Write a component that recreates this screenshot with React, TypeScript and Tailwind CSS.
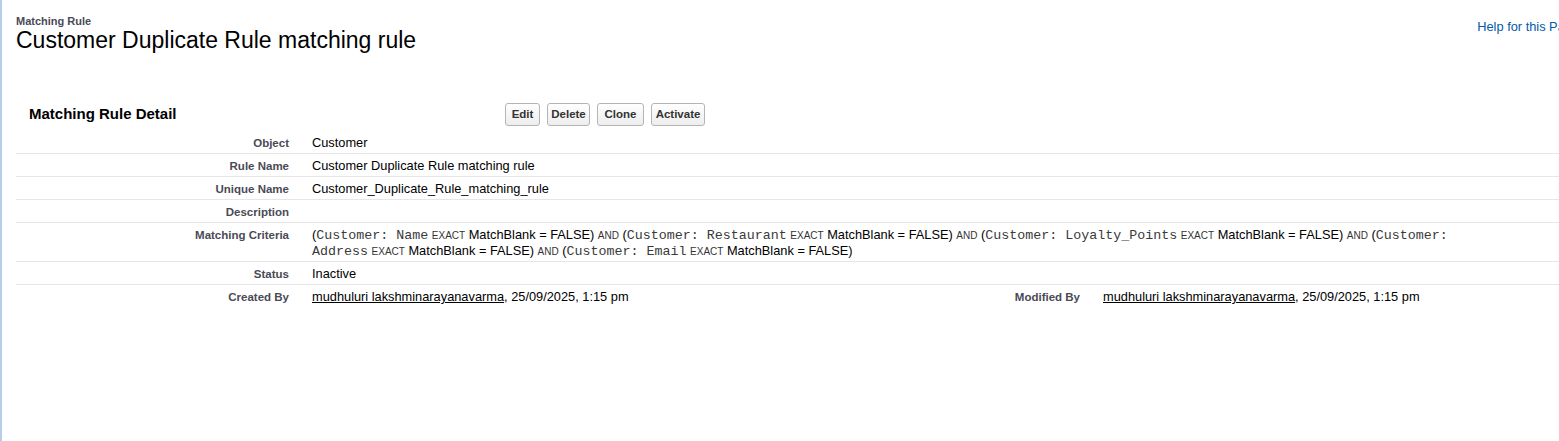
import React from "react";

const font = { fontFamily: '"Liberation Sans", Arial, sans-serif' };

function Btn({ label, w }: { label: string; w: string }) {
  return (
    <button
      className={`${w} h-[23px] rounded-[3px] border border-[#b5b5b5] bg-gradient-to-b from-white to-[#ededed] text-[11.5px] font-bold text-[#333] leading-none`}
    >
      {label}
    </button>
  );
}

function Mono({ children }: { children: React.ReactNode }) {
  return <span className="font-['Liberation_Mono',monospace] text-[13.33px] leading-none text-[#3a3a3a]">{children}</span>;
}

function Kw({ children }: { children: React.ReactNode }) {
  return <span className="text-[10px] uppercase leading-none text-[#333]">{children}</span>;
}

const labelCls = "shrink-0 pr-[10px] pt-[4px] pb-[2px] text-right text-[11.5px] font-bold leading-[16px] text-[#4a4a56]";
const valueCls = "pl-[13px] pt-[4px] pb-[2px] text-[12.8px] leading-[16px] text-black";

function Row({ label, children, last }: { label: string; children?: React.ReactNode; last?: boolean }) {
  return (
    <div className={`flex ${last ? "" : "border-b border-[#e6e6e6]"}`}>
      <div className={`w-[283px] ${labelCls}`}>{label}</div>
      <div className={`w-[1190px] min-h-[22px] ${valueCls}`}>{children}</div>
    </div>
  );
}

export default function App() {
  const crit: [string, boolean][] = [
    ["Name", true],
    ["Restaurant", true],
    ["Loyalty_Points", true],
    ["Address", true],
    ["Email", false],
  ];
  return (
    <div style={font} className="min-h-[441px] w-full overflow-hidden border-l-2 border-[#b7cdeb] bg-white">
      {/* header */}
      <div className="flex pl-[14px] pt-[15px]">
        <div className="flex-1">
          <div className="text-[11px] font-bold leading-[12px] text-[#4a4a56]">Matching Rule</div>
          <div className="text-[23px] leading-[27px] text-black">Customer Duplicate Rule matching rule</div>
        </div>
        <a className="mt-[5px] mr-[-20px] whitespace-nowrap text-[12.8px] leading-[14px] text-[#015ba7]">
          Help for this Page
        </a>
      </div>

      {/* detail block */}
      <div className="mt-[45px] pl-[14px]">
        <div className="flex h-[30px] items-center">
          <h2 className="w-[489px] pl-[13px] text-[15px] font-bold text-black">Matching Rule Detail</h2>
          <div className="flex gap-[7px] pt-[1px]">
            <Btn label="Edit" w="w-[35px]" />
            <Btn label="Delete" w="w-[43px]" />
            <Btn label="Clone" w="w-[47px]" />
            <Btn label="Activate" w="w-[54px]" />
          </div>
        </div>

        <div className="mt-[2px] w-[1560px]">
          <Row label="Object">Customer</Row>
          <Row label="Rule Name">Customer Duplicate Rule matching rule</Row>
          <Row label="Unique Name">Customer_Duplicate_Rule_matching_rule</Row>
          <Row label="Description" />
          <Row label="Matching Criteria">
            {crit.map(([f, and]) => (
              <React.Fragment key={f}>
                (<Mono>Customer: {f}</Mono> <Kw>exact</Kw> MatchBlank = FALSE){and && <> <Kw>and</Kw> </>}
              </React.Fragment>
            ))}
          </Row>
          <Row label="Status">Inactive</Row>
          <div className="flex">
            <div className={`w-[283px] ${labelCls}`}>Created By</div>
            <div className={`w-[506px] shrink-0 ${valueCls}`}>
              <a className="underline">mudhuluri lakshminarayanavarma</a>, 25/09/2025, 1:15 pm
            </div>
            <div className={`w-[285px] ${labelCls}`}>Modified By</div>
            <div className={valueCls}>
              <a className="underline">mudhuluri lakshminarayanavarma</a>, 25/09/2025, 1:15 pm
            </div>
          </div>
        </div>
      </div>
    </div>
  );
}
